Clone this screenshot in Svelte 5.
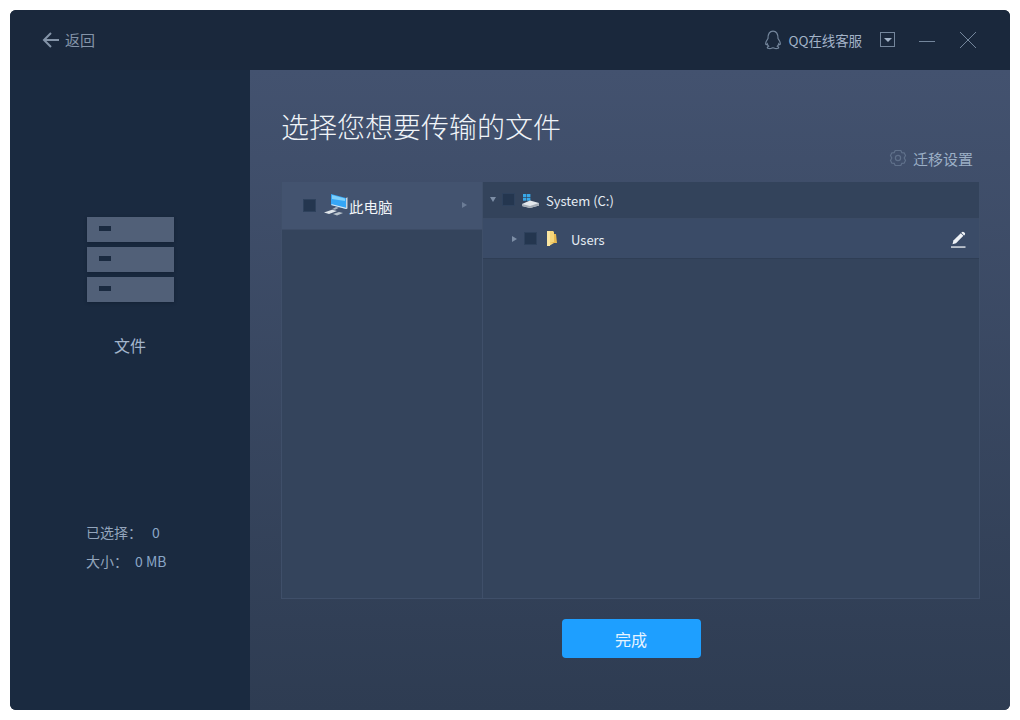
<script lang="ts">
	const stacks = [0, 1, 2];
</script>

<div class="window">
	<header class="titlebar">
		<div class="back">
			<svg width="18" height="18" viewBox="0 0 18 18" fill="none" stroke="#8494a8" stroke-width="2">
				<path d="M9 2 2 9l7 7M2 9h15" />
			</svg>
			<span>返回</span>
		</div>
		<div class="controls">
			<svg class="qq" width="18" height="20" viewBox="0 0 18 20" fill="none" stroke="#74869c" stroke-width="1.2">
				<path d="M4 8.5C4 4 6 1.2 9 1.2s5 2.800 5 7.300c1.200 1.700 2.500 3.800 2.300 5.400-.1 1-.9.800-1.600-.1-.2 1-.7 1.800-1.300 2.400 1 .4 1.500.9 1.300 1.500-.3.900-3 1.100-4.200.6-.6-.3-.400-.5-1.500-.5s-.9.200-1.500.5c-1.200.5-3.900.3-4.200-.6-.2-.6.300-1.100 1.300-1.500-.6-.6-1.100-1.400-1.300-2.400-.7.900-1.500 1.100-1.600.1C1.500 12.300 2.800 10.200 4 8.500Z" />
			</svg>
			<span class="service">QQ在线客服</span>
			<span class="dropdown"><i></i></span>
			<span class="minimize"></span>
			<svg class="close" width="18" height="18" viewBox="0 0 18 18" stroke="#74869c" stroke-width="1">
				<path d="M1 1l16 16M17 1 1 17" />
			</svg>
		</div>
	</header>

	<div class="content">
		<aside class="sidebar">
			<div class="stack">
				{#each stacks as s (s)}
					<div class="drive"><i></i></div>
				{/each}
			</div>
			<div class="kind">文件</div>
			<div class="stats">
				<div class="stat"><span class="label">已选择：</span><span class="num first">0</span></div>
				<div class="stat"><span class="label">大小：</span><span class="num">0 MB</span></div>
			</div>
		</aside>

		<main class="main">
			<h1>选择您想要传输的文件</h1>
			<div class="settings">
				<svg width="18" height="18" viewBox="0 0 18 18" fill="none" stroke="#5f708a" stroke-width="1.200">
					<path d="M6.200 1.500h5.600l1 2.100 2.300.2 1.400 2.700L15.200 9l1.300 2.500-1.400 2.700-2.300.2-1 2.100H6.200l-1-2.100-2.300-.2-1.400-2.700L2.800 9 1.500 6.500l1.400-2.700 2.300-.2Z" />
					<circle cx="9" cy="9" r="2.600" />
				</svg>
				<span>迁移设置</span>
			</div>

			<div class="browser">
				<div class="devices">
					<div class="device">
						<span class="check"></span>
						<svg class="pc" width="26" height="24" viewBox="0 0 26 24">
							<path d="M8 1l15 4v11L8 12Z" fill="#35a6f6" />
							<path d="M9 2l13 3.500V8L9 6Z" fill="#7fd0fb" />
							<path d="M23 5l1.500-.8v11L23 16Z" fill="#c9d4de" />
							<path d="M8 12l15 4 1.500-.8-2.500-.7-13-3.300Z" fill="#dfe7ee" />
							<path d="M13 14l3 .8-4 2-3-.6Z" fill="#aab6c2" />
							<path d="M1 19.500 9 16.800l5 1.200-8 3Z" fill="#dfe5ea" />
							<path d="M10 21l6-2 4 1-6 2.500Z" fill="#b9c3cc" />
						</svg>
						<span class="device-name">此电脑</span>
						<span class="arrow right dim"></span>
					</div>
				</div>
				<div class="tree">
					<div class="row root">
						<span class="arrow down"></span>
						<span class="check"></span>
						<svg class="hdd" width="20" height="16" viewBox="0 0 20 16">
							<rect x="2" y="1" width="3.400" height="3" fill="#38a8e8" />
							<rect x="6" y="1" width="3.400" height="3" fill="#38a8e8" />
							<rect x="2" y="4.700" width="3.400" height="3" fill="#38a8e8" />
							<rect x="6" y="4.700" width="3.400" height="3" fill="#38a8e8" />
							<path d="M1 11l8-3.500 9 2.500v2.500L9 15l-8-2Z" fill="#e4e8ec" />
							<path d="M1 11l8 2 9-3v2.500L9 15l-8-2Z" fill="#a5adb6" />
						</svg>
						<span class="row-name">System (C:)</span>
					</div>
					<div class="row child">
						<span class="arrow right"></span>
						<span class="check"></span>
						<svg class="folder" width="14" height="16" viewBox="0 0 14 16">
							<path d="M1 0h6l1 1v11l-5 3H1Z" fill="#f6d67a" />
							<path d="M8 3h2l1 9H3l5-1Z" fill="#e8b94f" />
							<path d="M1 0h3v15H1Z" fill="#fbe6a2" />
						</svg>
						<span class="row-name">Users</span>
						<svg class="pencil" width="16" height="17" viewBox="0 0 16 17" fill="#eef2f6">
							<path d="M1.500 13.200 2.400 9.600 9.800 2.200l2.600 2.600-7.400 7.400Z" />
							<path d="M10.800 1.200c.7-.7 1.500-.7 2.200 0l.6.600c.7.700.7 1.500 0 2.200l-.5.500-2.800-2.800Z" />
							<rect x="0" y="15.400" width="14.500" height="1.300" />
						</svg>
					</div>
				</div>
			</div>

			<div class="actions">
				<button class="finish">完成</button>
			</div>
		</main>
	</div>
</div>

<style>
	:global(body) {
		background: #fff;
	}

	.window {
		width: 1000px;
		height: 700px;
		margin: 10px;
		border-radius: 6px;
		overflow: hidden;
		display: flex;
		flex-direction: column;
		background: #1a2a40;
		font-family: "Noto Sans CJK SC", "Open Sans", sans-serif;
	}

	.titlebar {
		flex: none;
		height: 60px;
		box-sizing: border-box;
		display: flex;
		align-items: center;
		justify-content: space-between;
		padding: 0 33px 0 32px;
		background: #1a283c;
	}

	.back {
		display: flex;
		align-items: center;
		gap: 5px;
		margin-top: -1px;
		font-size: 15px;
		color: #8494a8;
	}

	.controls {
		display: flex;
		align-items: center;
		margin-top: -1px;
	}

	.qq {
		margin-right: 7px;
	}

	.service {
		font-size: 13.500px;
		letter-spacing: -0.100px;
		color: #a3b3c8;
		margin-right: 18px;
	}

	.dropdown {
		width: 15px;
		height: 15px;
		box-sizing: border-box;
		border: 1px solid #74869c;
		display: flex;
		align-items: center;
		justify-content: center;
		margin-right: 24px;
	}

	.dropdown i {
		border: 4px solid transparent;
		border-top: 4px solid #a3b3c8;
		border-bottom: 0;
	}

	.minimize {
		width: 16px;
		height: 1px;
		background: #74869c;
		margin: 4px 24px 0 0;
	}

	.content {
		flex: 1;
		min-height: 0;
		display: flex;
	}

	.sidebar {
		flex: none;
		width: 240px;
		box-sizing: border-box;
		padding-top: 147px;
		display: flex;
		flex-direction: column;
		background: #1a2a40;
	}

	.stack {
		display: flex;
		flex-direction: column;
		gap: 5px;
		margin-left: 77px;
	}

	.drive {
		width: 87px;
		height: 25px;
		background: #516078;
		box-shadow: 0 1px 3px rgba(10, 20, 35, 0.4);
		display: flex;
		align-items: center;
		padding-left: 12px;
		box-sizing: border-box;
	}

	.drive i {
		width: 12px;
		height: 5px;
		background: #1a2a40;
		margin-top: -2px;
	}

	.kind {
		margin-top: 31px;
		text-align: center;
		font-size: 16px;
		line-height: 24px;
		color: #a3b5cc;
	}

	.stats {
		margin-top: 165px;
		margin-left: 76px;
		display: flex;
		flex-direction: column;
		gap: 9px;
		font-size: 14px;
		line-height: 20px;
	}

	.stat {
		display: flex;
	}

	.label {
		color: #93a5bc;
	}

	.num {
		color: #8aa6c6;
		margin-left: 7px;
	}

	.num.first {
		margin-left: 10px;
	}

	.main {
		flex: 1;
		min-width: 0;
		box-sizing: border-box;
		padding: 35px 30px 0 31px;
		background: linear-gradient(#43526f, #2e3c52);
		display: flex;
		flex-direction: column;
	}

	h1 {
		margin: 0;
		font-size: 28px;
		font-weight: 300;
		line-height: 42px;
		color: #f0f4f8;
	}

	.settings {
		display: flex;
		align-items: center;
		justify-content: flex-end;
		gap: 6px;
		height: 20px;
		margin-top: 1px;
		margin-right: 7px;
		font-size: 15px;
		color: #9cafc6;
	}

	.browser {
		flex: none;
		height: 417px;
		margin-top: 14px;
		box-sizing: border-box;
		display: flex;
		background: #34445c;
		border: 1px solid #3f4f69;
		border-top: 0;
	}

	.devices {
		flex: none;
		width: 200px;
		border-right: 1px solid #3f4f69;
	}

	.device {
		height: 47px;
		padding-left: 21px;
		display: flex;
		align-items: center;
		background: #43536f;
		box-shadow: 0 1px 0 #3d4c66;
		position: relative;
	}

	.check {
		flex: none;
		width: 13px;
		height: 13px;
		box-sizing: border-box;
		background: #24364f;
		border: 1px solid #2e415c;
	}

	.pc {
		margin-left: 7px;
		margin-top: -2px;
	}

	.device-name {
		margin-left: 0;
		font-size: 14.500px;
		color: #f2f5f8;
		margin-top: 2px;
	}

	.arrow {
		flex: none;
		width: 0;
		height: 0;
		border: 3.500px solid transparent;
	}

	.arrow.right {
		border-left: 5px solid #7d8ea6;
		border-right: 0;
	}

	.arrow.right.dim {
		border-left-color: #6b7c96;
		position: absolute;
		left: 180px;
		top: 20px;
	}

	.arrow.down {
		border-top: 5px solid #7d8ea6;
		border-bottom: 0;
	}

	.tree {
		flex: 1;
		min-width: 0;
	}

	.row {
		display: flex;
		align-items: center;
		font-size: 13px;
		color: #e6edf4;
	}

	.root {
		height: 37px;
		padding-left: 7px;
		background: #33435b;
		box-shadow: inset 0 -1px 0 #3b4b65;
	}

	.root .check {
		margin-left: 6px;
		margin-top: -2px;
	}

	.root .arrow {
		margin-top: -2px;
	}

	.hdd {
		margin-left: 6px;
	}

	.root .row-name {
		margin-left: 5px;
	}

	.child {
		height: 39px;
		padding-left: 29px;
		background: #3a4b67;
		position: relative;
		box-shadow: 0 1px 0 #2f3e55;
	}

	.child .check {
		margin-left: 7px;
	}

	.folder {
		margin-left: 9px;
	}

	.child .row-name {
		margin-left: 11px;
		margin-top: 2px;
	}

	.pencil {
		position: absolute;
		right: 12px;
		top: 12px;
	}

	.actions {
		display: flex;
		justify-content: center;
		margin-top: 20px;
		padding-left: 1px;
	}

	.finish {
		width: 139px;
		height: 39px;
		border: 0;
		border-radius: 4px;
		background: #1e9fff;
		color: #e8f4ff;
		font-family: inherit;
		font-size: 16px;
		padding: 0;
	}
</style>
